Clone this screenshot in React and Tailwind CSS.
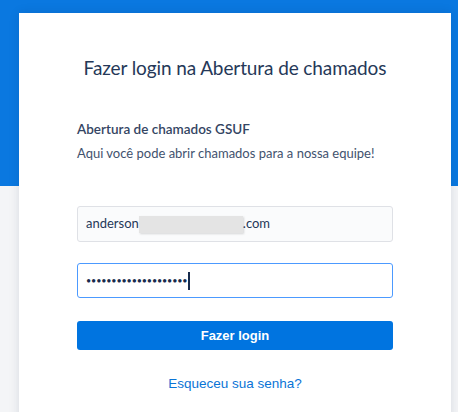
import React from 'react';

const App = () => {
    return (
        <div className="h-[412px] overflow-hidden bg-[#f4f5f7]" style={{ fontFamily: 'Lato, "Noto Sans", sans-serif' }}>
            {/* faixa azul do topo */}
            <div className="h-[186px] bg-[#0a78e0]" />
            <div className="ml-[19px] mr-[7px] -mt-[173px] h-[420px] bg-white shadow-[0_0_10px_rgba(9,30,66,0.12)] px-[58px] pt-[41px]">
                <h1 className="whitespace-nowrap text-center text-[19px] leading-[28px] tracking-[-0.1px] text-[#253858]">
                    Fazer login na Abertura de chamados
                </h1>
                <h2 className="mt-[37px] text-[13.5px] leading-[20px] font-semibold text-[#344563]">
                    Abertura de chamados GSUF
                </h2>
                <p className="mt-[5px] text-[13px] leading-[18px] text-[#42526e]">
                    Aqui você pode abrir chamados para a nossa equipe!
                </p>
                <div className="mt-[44px] flex h-[36px] items-center rounded-[3px] border border-[#dfe1e6] bg-[#fafbfc] px-[8px] text-[13px] text-[#253858]">
                    <span>anderson</span>
                    <span className="h-[17px] w-[104px] bg-[#e4e4e4] shadow-[1px_1px_2px_rgba(0,0,0,0.15)]" />
                    <span>.com</span>
                </div>
                <div className="mt-[21px] flex h-[35px] items-center rounded-[3px] border border-[#4c9aff] bg-white px-[8px] text-[#172b4d]">
                    <span className="text-[9px] tracking-[-0.15px]">••••••••••••••••••••</span>
                    <span className="ml-[1px] h-[18px] w-[1.5px] bg-[#172b4d]" />
                </div>
                <button className="mt-[23px] flex h-[29px] w-full items-center justify-center rounded-[3px] bg-[#0074e0] text-[13px] font-bold text-white" style={{ fontFamily: '"Liberation Sans", Arial, sans-serif' }}>
                    Fazer login
                </button>
                <div className="mt-[24px] text-center text-[13.5px] text-[#0a74d6]" style={{ fontFamily: '"Liberation Sans", Arial, sans-serif' }}>
                    Esqueceu sua senha?
                </div>
            </div>
        </div>
    );
};

export default App;
